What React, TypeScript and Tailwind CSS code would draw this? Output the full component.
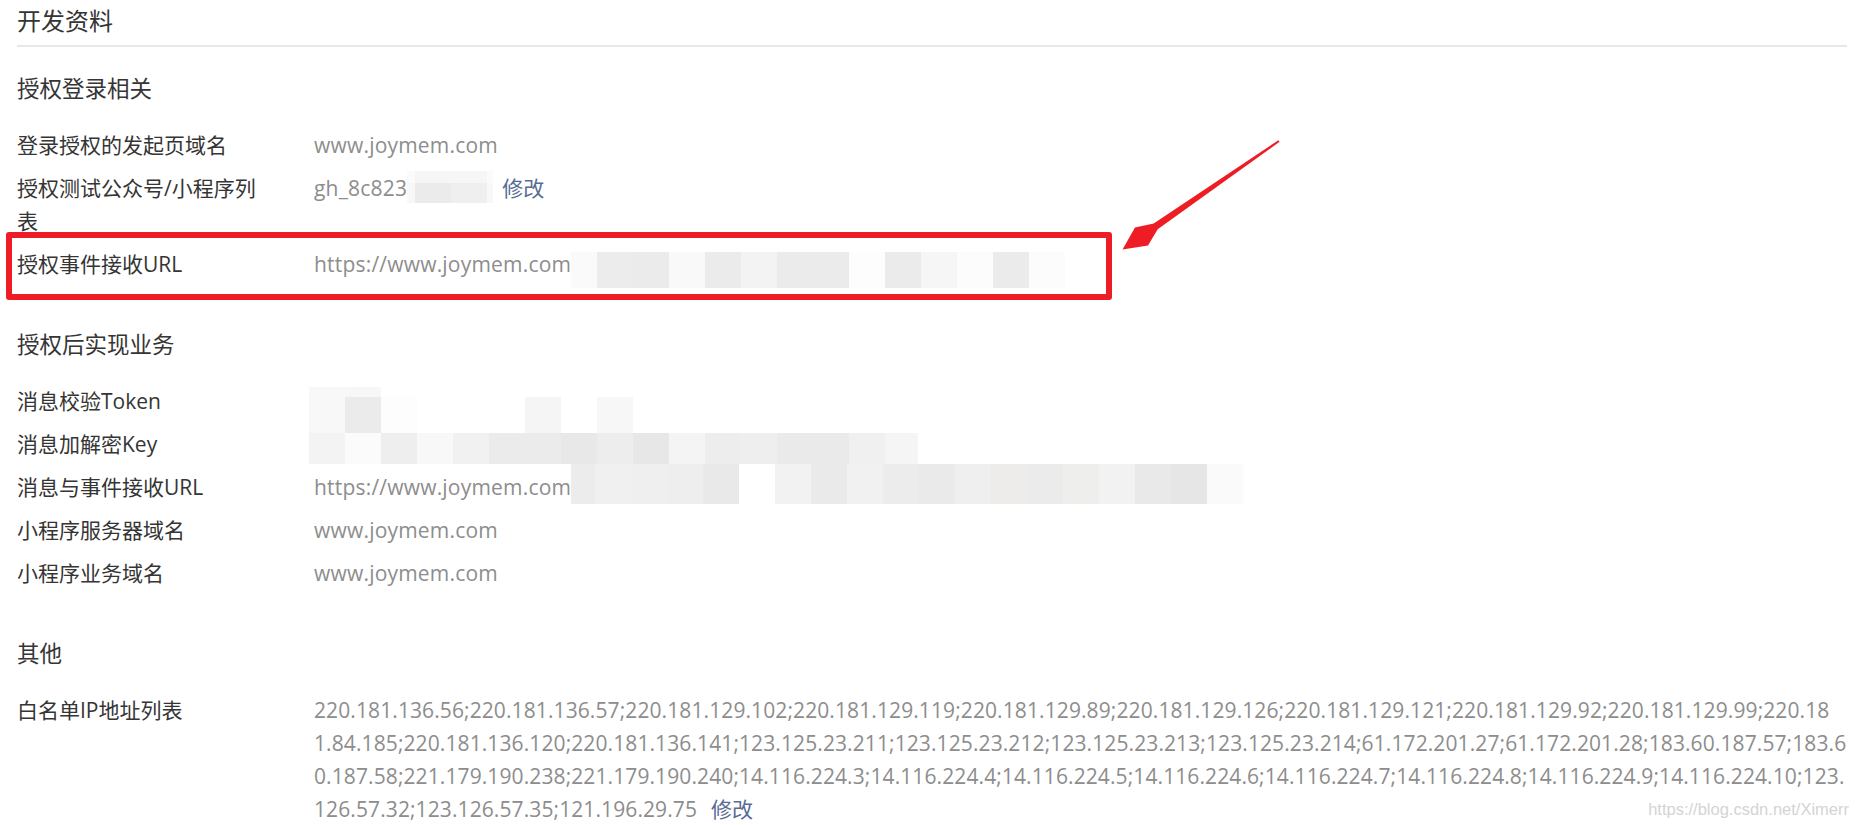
import React from "react";

type MosaicRow = { h: string; cells: string[] };

function Mosaic({ rows, className }: { rows: MosaicRow[]; className: string }) {
  return (
    <div className={`flex shrink-0 flex-col ${className}`}>
      {rows.map((r, i) => (
        <div key={i} className={`flex ${r.h}`}>
          {r.cells.map((c, j) => (
            <div key={j} className={c} />
          ))}
        </div>
      ))}
    </div>
  );
}

const ghMosaic: MosaicRow[] = [
  { h: "h-[12px]", cells: ["w-[8px] bg-[#fbfbfb]", "w-[36px] bg-[#f6f6f6]", "w-[36px] bg-[#f6f6f6]", "w-[6px] bg-[#fbfbfb]"] },
  { h: "h-[20px]", cells: ["w-[8px] bg-[#f8f8f8]", "w-[36px] bg-[#ebebeb]", "w-[36px] bg-[#efefef]", "w-[6px] bg-[#f8f8f8]"] },
];

const authUrlMosaic: MosaicRow[] = [
  {
    h: "h-[36px]",
    cells: [
      "w-[26px] bg-[#fafafa]",
      "w-[36px] bg-[#ececec]",
      "w-[36px] bg-[#ebebeb]",
      "w-[36px] bg-[#f9f9f9]",
      "w-[36px] bg-[#ebebeb]",
      "w-[36px] bg-[#f3f3f3]",
      "w-[36px] bg-[#eaebea]",
      "w-[36px] bg-[#eaebea]",
      "w-[36px] bg-[#fdfdfd]",
      "w-[36px] bg-[#ebebeb]",
      "w-[36px] bg-[#f6f6f6]",
      "w-[36px] bg-[#fcfcfc]",
      "w-[36px] bg-[#eaebea]",
      "w-[36px] bg-[#fcfcfc]",
    ],
  },
];

const tokenMosaic: MosaicRow[] = [
  { h: "h-[10px]", cells: ["w-[36px] bg-[#f8f8f8]", "w-[36px] bg-[#f7f7f7]"] },
  {
    h: "h-[36px]",
    cells: [
      "w-[36px] bg-[#f8f8f8]",
      "w-[36px] bg-[#ebebeb]",
      "w-[36px] bg-[#fdfdfd]",
      "w-[108px]",
      "w-[36px] bg-[#f5f5f5]",
      "w-[36px]",
      "w-[36px] bg-[#f7f7f7]",
    ],
  },
];

const keyMosaic: MosaicRow[] = [
  {
    h: "h-[31px]",
    cells: [
      "w-[36px] bg-[#f3f3f3]",
      "w-[36px] bg-[#fbfbfb]",
      "w-[36px] bg-[#eeeeee]",
      "w-[36px] bg-[#f8f8f8]",
      "w-[36px] bg-[#f1f1f1]",
      "w-[36px] bg-[#ebebeb]",
      "w-[36px] bg-[#ebebeb]",
      "w-[36px] bg-[#e8e8e8]",
      "w-[36px] bg-[#ededed]",
      "w-[36px] bg-[#e7e7e7]",
      "w-[36px] bg-[#f4f4f4]",
      "w-[36px] bg-[#ededed]",
      "w-[36px] bg-[#eeeeee]",
      "w-[36px] bg-[#eaeaea]",
      "w-[36px] bg-[#eaeaea]",
      "w-[36px] bg-[#f0f0f0]",
      "w-[33px] bg-[#f4f5f4]",
    ],
  },
];

const msgUrlMosaic: MosaicRow[] = [
  {
    h: "h-[40px]",
    cells: [
      "w-[24px] bg-[#ececec]",
      "w-[36px] bg-[#eff0ef]",
      "w-[36px] bg-[#efefef]",
      "w-[36px] bg-[#eeeeee]",
      "w-[36px] bg-[#e9e9e9]",
      "w-[36px] bg-[#ffffff]",
      "w-[36px] bg-[#f2f2f2]",
      "w-[36px] bg-[#eaeaea]",
      "w-[36px] bg-[#f1f1f1]",
      "w-[36px] bg-[#ebeceb]",
      "w-[36px] bg-[#eaeaea]",
      "w-[36px] bg-[#efefef]",
      "w-[36px] bg-[#edecea]",
      "w-[36px] bg-[#ebebeb]",
      "w-[36px] bg-[#eeeeec]",
      "w-[36px] bg-[#f2f2f2]",
      "w-[36px] bg-[#e9e9e9]",
      "w-[36px] bg-[#e6e6e6]",
      "w-[36px] bg-[#f9faf9]",
    ],
  },
];

const IP_LINES = [
  "220.181.136.56;220.181.136.57;220.181.129.102;220.181.129.119;220.181.129.89;220.181.129.126;220.181.129.121;220.181.129.92;220.181.129.99;220.18",
  "1.84.185;220.181.136.120;220.181.136.141;123.125.23.211;123.125.23.212;123.125.23.213;123.125.23.214;61.172.201.27;61.172.201.28;183.60.187.57;183.6",
  "0.187.58;221.179.190.238;221.179.190.240;14.116.224.3;14.116.224.4;14.116.224.5;14.116.224.6;14.116.224.7;14.116.224.8;14.116.224.9;14.116.224.10;123.",
  "126.57.32;123.126.57.35;121.196.29.75",
];

function Row({ label, children }: { label: string; children: React.ReactNode }) {
  return (
    <div className="flex">
      <div className="w-[297px] shrink-0 pr-[47px] text-[21px] leading-[33px] text-[#353535]">{label}</div>
      <div className="min-w-0 flex-1 text-[21px] leading-[33px] tracking-[0.2px] text-[#8d8d8d]">{children}</div>
    </div>
  );
}

function Link({ className = "" }: { className?: string }) {
  return <a className={`cursor-pointer tracking-normal text-[#576b95] ${className}`}>修改</a>;
}

export default function App() {
  return (
    <div className="relative min-h-screen bg-white px-[17px] font-['Open_Sans','Noto_Sans_CJK_SC',sans-serif] text-[#353535]">
      <div className="border-b-2 border-[#e6e9ec] pt-[4px] pb-[8px] text-[24px] leading-[33px]">开发资料</div>

      <div className="mt-[25px] mb-[24px] text-[22.5px] leading-[33px]">授权登录相关</div>
      <div className="flex flex-col gap-[10px]">
        <Row label="登录授权的发起页域名">www.joymem.com</Row>
        <Row label="授权测试公众号/小程序列表">
          <div className="flex items-start">
            <span>gh_8c823</span>
            <Mosaic rows={ghMosaic} className="-mt-[1px]" />
            <Link className="ml-[9px]" />
          </div>
        </Row>
        <Row label="授权事件接收URL">
          <div className="flex items-start">
            <span>https://www.joymem.com</span>
            <Mosaic rows={authUrlMosaic} className="mt-[4px] -mb-[7px]" />
          </div>
        </Row>
      </div>

      <div className="mt-[47px] mb-[24px] text-[22.5px] leading-[33px]">授权后实现业务</div>
      <div className="flex flex-col gap-[10px]">
        <Row label="消息校验Token">
          <div className="flex items-start">
            <Mosaic rows={tokenMosaic} className="-ml-[5px] mt-[2px] -mb-[15px]" />
          </div>
        </Row>
        <Row label="消息加解密Key">
          <div className="flex items-start">
            <Mosaic rows={keyMosaic} className="-ml-[5px] mt-[5px] -mb-[3px]" />
          </div>
        </Row>
        <Row label="消息与事件接收URL">
          <div className="flex items-start">
            <span>https://www.joymem.com</span>
            <Mosaic rows={msgUrlMosaic} className="-mt-[7px]" />
          </div>
        </Row>
        <Row label="小程序服务器域名">www.joymem.com</Row>
        <Row label="小程序业务域名">www.joymem.com</Row>
      </div>

      <div className="mt-[47px] mb-[24px] text-[22.5px] leading-[33px]">其他</div>
      <div className="flex flex-col gap-[10px]">
        <Row label="白名单IP地址列表">
          <div className="tracking-[0.1px]">
            {IP_LINES.map((line, i) => (
              <div key={i} className="whitespace-nowrap">
                {line}
                {i === IP_LINES.length - 1 && <Link className="ml-[14px]" />}
              </div>
            ))}
          </div>
        </Row>
      </div>

      {/* annotation: red highlight box */}
      <div className="pointer-events-none absolute left-[6px] top-[232px] h-[68px] w-[1106px] rounded-[3px] border-[6px] border-[#ee1c25]" />

      {/* annotation: arrow */}
      <svg
        className="pointer-events-none absolute left-[1110px] top-[130px]"
        width="180"
        height="130"
        viewBox="1110 130 180 130"
      >
        <polygon
          fill="#ee1c25"
          points="1278.4,140.2 1153.7,223.5 1135,227.5 1122.5,249.5 1148,245.5 1157.7,229.3 1279.6,141.8"
        />
      </svg>

      {/* watermark */}
      <div className="pointer-events-none absolute bottom-[7px] right-[15px] font-['Liberation_Sans',sans-serif] text-[16.5px] leading-[20px] text-[#d4d4d4] [text-shadow:0_0_1px_#ffffff]">
        https://blog.csdn.net/Ximerr
      </div>
    </div>
  );
}
